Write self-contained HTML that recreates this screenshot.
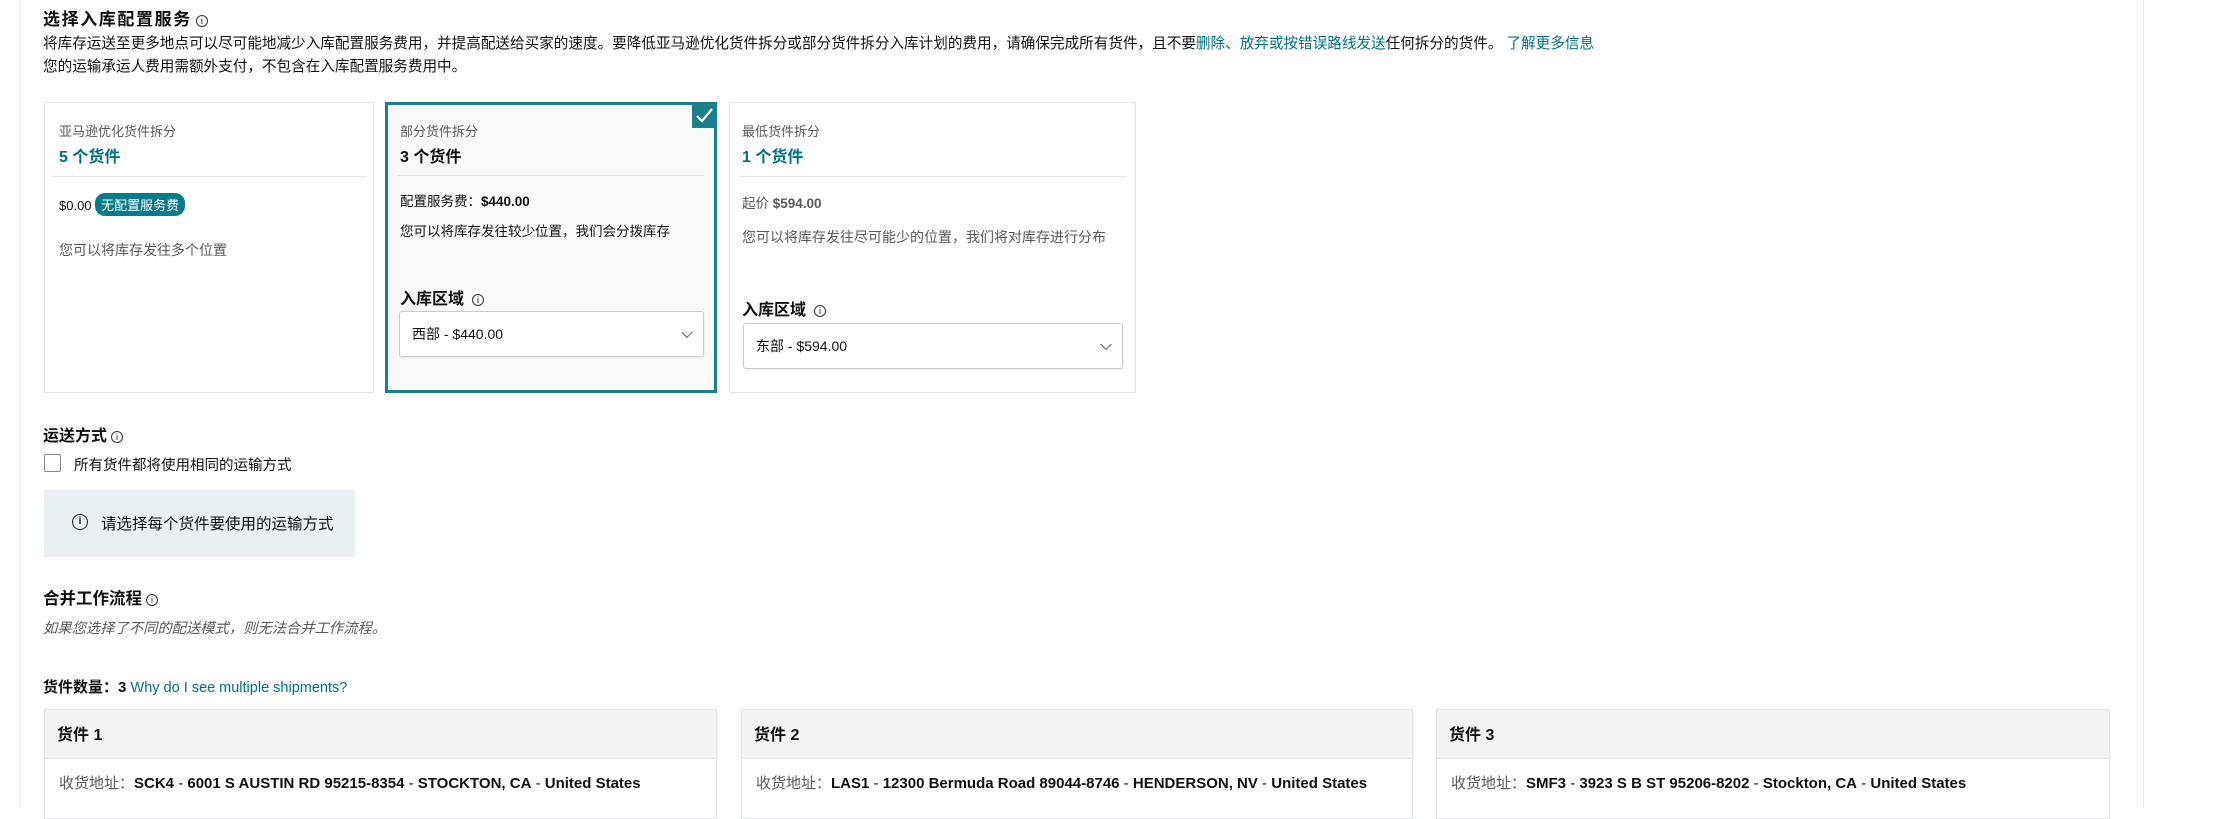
<!DOCTYPE html>
<html><head><meta charset="utf-8"><style>
*{margin:0;padding:0;box-sizing:border-box}
body{width:2230px;height:808px;overflow:hidden;background:#fff;font-family:"Liberation Sans","Noto Sans CJK SC",sans-serif;color:#0f1111;position:relative}
.a{position:absolute;white-space:nowrap}
.h{font-size:16px;font-weight:bold}
.t{font-size:13px}
.g{color:#565959}
.link{color:#007185}
.info{display:inline-block;width:12px;height:12px;border:1px solid #333;border-radius:50%;font-size:9px;line-height:10px;text-align:center;font-weight:normal;vertical-align:1px;margin-left:4px;letter-spacing:0}
.card{position:absolute;top:102px;height:291px;border:1px solid #e3e6e6;background:#fff}
.sel{border:3px solid #1b7f8e;background:#f8fafa}
.div{position:absolute;height:1px;background:#e3e6e6}
.select{position:absolute;border:1px solid #c9cccc;border-radius:3px;background:#fff;box-shadow:0 1px 2px rgba(0,0,0,.08);font-size:14px;padding-left:12px;display:flex;align-items:center}
.chev{position:absolute;right:12px;top:50%;width:8px;height:8px;border-right:1.3px solid #555;border-bottom:1.3px solid #555;transform:translateY(-70%) rotate(45deg)}
.box{position:absolute;top:709px;height:110px;border:1px solid #e3e6e6;background:#fff}
.box .hd{height:49px;background:#f3f5f5;border-bottom:1px solid #e3e6e6;font-size:16px;font-weight:bold;padding:11px 0 0 12px}
.box .ad{font-size:15px;padding:13px 0 0 14px}
.box .ad b{font-weight:bold}
</style></head><body>
<div class="a" style="left:20px;top:0;width:1px;height:808px;background:#eee"></div>
<div class="a" style="left:2143px;top:0;width:1px;height:808px;background:#eee"></div>

<div class="a h" style="left:43px;top:5px;font-size:17px;letter-spacing:1.6px">选择入库配置服务<span class="info">i</span></div>
<div class="a" style="left:43px;top:32px;font-size:14.6px">将库存运送至更多地点可以尽可能地减少入库配置服务费用，并提高配送给买家的速度。要降低亚马逊优化货件拆分或部分货件拆分入库计划的费用，请确保完成所有货件，且不要<span class="link">删除、放弃或按错误路线发送</span>任何拆分的货件。 <span class="link">了解更多信息</span></div>
<div class="a" style="left:43px;top:55px;font-size:14.6px">您的运输承运人费用需额外支付，不包含在入库配置服务费用中。</div>

<div class="card" style="left:44px;width:330px">
 <div class="a t g" style="left:14px;top:18px;font-size:13px">亚马逊优化货件拆分</div>
 <div class="a link" style="left:14px;top:40px;font-size:16px;font-weight:bold">5 个货件</div>
 <div class="div" style="left:8px;right:8px;top:73px"></div>
 <div class="a t" style="left:14px;top:90px">$0.00 <span style="display:inline-block;background:#087a8a;color:#fff;border-radius:10px;padding:2px 6px;font-size:13px">无配置服务费</span></div>
 <div class="a g" style="left:14px;top:137px;font-size:14px">您可以将库存发往多个位置</div>
</div>

<div class="card sel" style="left:385px;width:332px">
 <div class="a" style="right:-3px;top:-3px;width:25px;height:26px;background:#1b7f8e"><svg width="25" height="26"><path d="M5 14 L10 19 L20 7" stroke="#fff" stroke-width="2.2" fill="none"/></svg></div>
 <div class="a g" style="left:12px;top:16px;font-size:13px">部分货件拆分</div>
 <div class="a" style="left:12px;top:38px;font-size:16px;font-weight:bold">3 个货件</div>
 <div class="div" style="left:10px;right:10px;top:70px"></div>
 <div class="a" style="left:12px;top:85px;font-size:13.5px">配置服务费：<b>$440.00</b></div>
 <div class="a" style="left:12px;top:115px;font-size:13.5px">您可以将库存发往较少位置，我们会分拨库存</div>
 <div class="a" style="left:12px;top:180px;font-size:16px;font-weight:bold">入库区域<span class="info" style="margin-left:8px">i</span></div>
 <div class="select" style="left:11px;top:206px;width:305px;height:46px">西部 - $440.00<span class="chev"></span></div>
</div>

<div class="card" style="left:729px;width:407px">
 <div class="a g" style="left:12px;top:18px;font-size:13px">最低货件拆分</div>
 <div class="a link" style="left:12px;top:40px;font-size:16px;font-weight:bold">1 个货件</div>
 <div class="div" style="left:10px;right:10px;top:73px"></div>
 <div class="a g" style="left:12px;top:89px;font-size:13.5px">起价 <b>$594.00</b></div>
 <div class="a g" style="left:12px;top:124px;font-size:14px">您可以将库存发往尽可能少的位置，我们将对库存进行分布</div>
 <div class="a" style="left:12px;top:193px;font-size:16px;font-weight:bold">入库区域<span class="info" style="margin-left:8px">i</span></div>
 <div class="select" style="left:13px;top:220px;width:380px;height:46px">东部 - $594.00<span class="chev"></span></div>
</div>

<div class="a h" style="left:43px;top:422px;font-size:16px">运送方式<span class="info">i</span></div>
<div class="a" style="left:44px;top:454px;width:17px;height:18px;border:1px solid #888;border-radius:2px"></div>
<div class="a" style="left:74px;top:454px;font-size:14.5px">所有货件都将使用相同的运输方式</div>
<div class="a" style="left:44px;top:490px;width:311px;height:67px;background:#e8f0f2"></div>
<div class="a" style="left:72px;top:514px;width:16px;height:16px;border:1.5px solid #222;border-radius:50%;font-size:10px;text-align:center;line-height:13px;font-weight:bold">i</div>
<div class="a" style="left:101px;top:512px;font-size:15.5px">请选择每个货件要使用的运输方式</div>

<div class="a h" style="left:43px;top:585px;font-size:16.5px">合并工作流程<span class="info">i</span></div>
<div class="a g" style="left:43px;top:617px;font-style:italic;font-size:14.3px">如果您选择了不同的配送模式，则无法合并工作流程。</div>

<div class="a" style="left:43px;top:676px;font-size:15px"><b>货件数量：3</b> <span class="link" style="font-size:14.5px">Why do I see multiple shipments?</span></div>

<div class="box" style="left:44px;width:673px"><div class="hd">货件 1</div><div class="ad"><span class="g">收货地址：</span><b>SCK4</b> - <b>6001 S AUSTIN RD 95215-8354</b> - <b>STOCKTON, CA</b> - <b>United States</b></div></div>
<div class="box" style="left:741px;width:672px"><div class="hd">货件 2</div><div class="ad"><span class="g">收货地址：</span><b>LAS1</b> - <b>12300 Bermuda Road 89044-8746</b> - <b>HENDERSON, NV</b> - <b>United States</b></div></div>
<div class="box" style="left:1436px;width:674px"><div class="hd">货件 3</div><div class="ad"><span class="g">收货地址：</span><b>SMF3</b> - <b>3923 S B ST 95206-8202</b> - <b>Stockton, CA</b> - <b>United States</b></div></div>
</body></html>
